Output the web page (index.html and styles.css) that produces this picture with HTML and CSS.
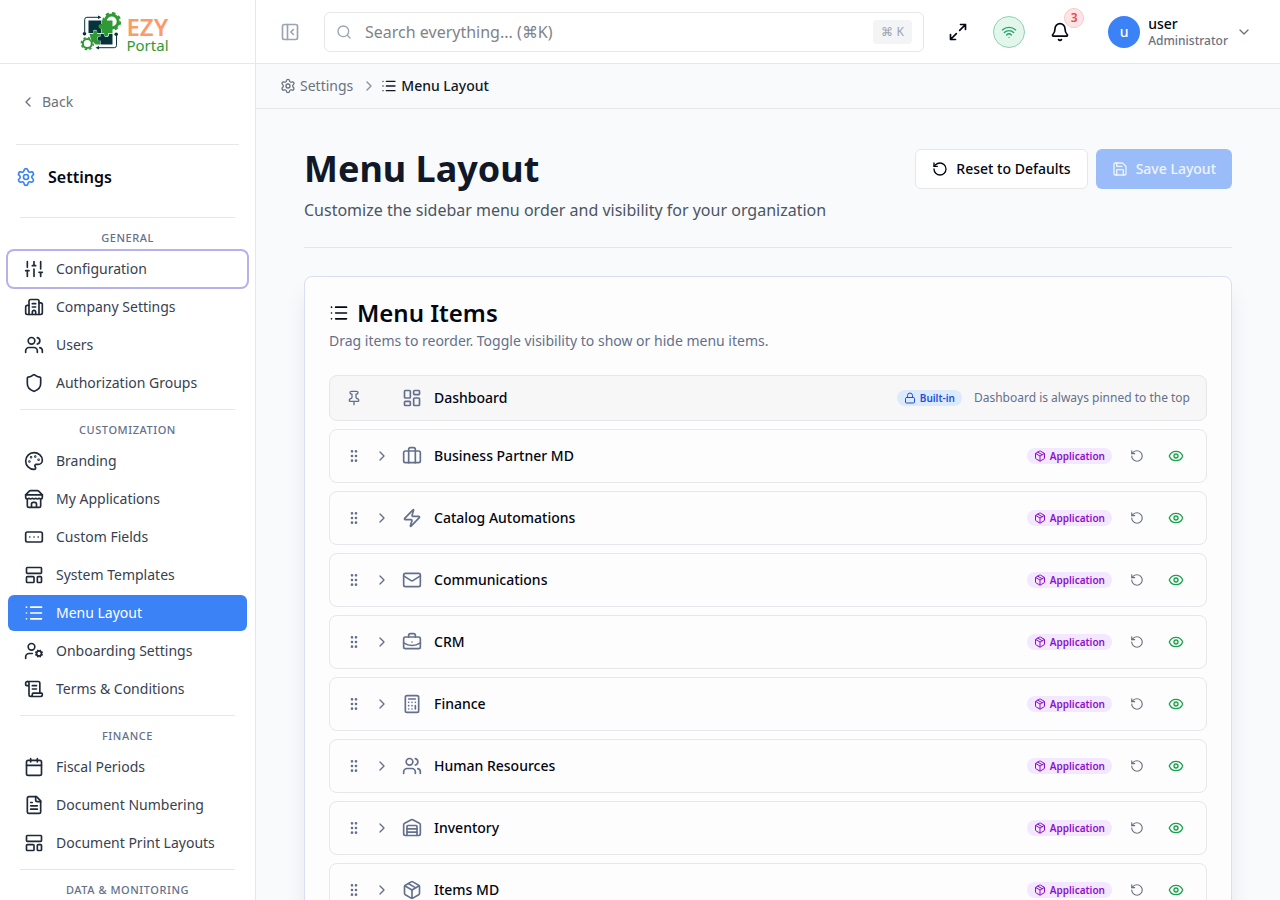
FILE: index.html
```
<!DOCTYPE html>
<html lang="en">
<head>
    <meta charset="UTF-8">
    <meta name="viewport" content="width=device-width, initial-scale=1.0">
    <title>Menu Layout - EZY Portal</title>
    <link rel="stylesheet" href="styles.css">
</head>
<body>
    <!-- Icon set -->
    <svg class="sprite" aria-hidden="true">
        <symbol id="i-left" viewBox="0 0 24 24"><path d="m15 18-6-6 6-6"/></symbol>
        <symbol id="i-right" viewBox="0 0 24 24"><path d="m9 18 6-6-6-6"/></symbol>
        <symbol id="i-down" viewBox="0 0 24 24"><path d="m6 9 6 6 6-6"/></symbol>
        <symbol id="i-settings" viewBox="0 0 24 24"><path d="M9.671 4.136a2.34 2.34 0 0 1 4.659 0 2.34 2.34 0 0 0 3.319 1.915 2.34 2.34 0 0 1 2.33 4.033 2.34 2.34 0 0 0 0 3.831 2.34 2.34 0 0 1-2.33 4.033 2.34 2.34 0 0 0-3.319 1.915 2.34 2.34 0 0 1-4.659 0 2.34 2.34 0 0 0-3.32-1.915 2.34 2.34 0 0 1-2.33-4.033 2.34 2.34 0 0 0 0-3.831A2.34 2.34 0 0 1 6.35 6.051a2.34 2.34 0 0 0 3.319-1.915"/><circle cx="12" cy="12" r="3"/></symbol>
        <symbol id="i-sliders" viewBox="0 0 24 24"><path d="M4 21v-7M4 10V3M12 21v-9M12 8V3M20 21v-5M20 12V3M2 14h4M10 8h4M18 16h4"/></symbol>
        <symbol id="i-building" viewBox="0 0 24 24"><path d="M10 12h4M10 8h4M14 21v-3a2 2 0 0 0-4 0v3"/><path d="M6 10H4a2 2 0 0 0-2 2v7a2 2 0 0 0 2 2h16a2 2 0 0 0 2-2V9a2 2 0 0 0-2-2h-2"/><path d="M6 21V5a2 2 0 0 1 2-2h8a2 2 0 0 1 2 2v16"/></symbol>
        <symbol id="i-users" viewBox="0 0 24 24"><path d="M16 21v-2a4 4 0 0 0-4-4H6a4 4 0 0 0-4 4v2"/><circle cx="9" cy="7" r="4"/><path d="M22 21v-2a4 4 0 0 0-3-3.87M16 3.13a4 4 0 0 1 0 7.75"/></symbol>
        <symbol id="i-shield" viewBox="0 0 24 24"><path d="M20 13c0 5-3.5 7.5-7.66 8.95a1 1 0 0 1-.67-.01C7.5 20.5 4 18 4 13V6a1 1 0 0 1 1-1c2 0 4.5-1.2 6.24-2.72a1.17 1.17 0 0 1 1.52 0C14.51 3.81 17 5 19 5a1 1 0 0 1 1 1z"/></symbol>
        <symbol id="i-palette" viewBox="0 0 24 24"><path d="M12 22a1 1 0 0 1 0-20 10 9 0 0 1 10 9 5 5 0 0 1-5 5h-2.25a1.75 1.75 0 0 0-1.4 2.8l.3.4a1.75 1.75 0 0 1-1.4 2.8z"/><circle cx="13.5" cy="6.5" r=".5"/><circle cx="17.5" cy="10.5" r=".5"/><circle cx="6.5" cy="12.5" r=".5"/><circle cx="8.5" cy="7.5" r=".5"/></symbol>
        <symbol id="i-store" viewBox="0 0 24 24"><path d="m2 7 4.41-4.41A2 2 0 0 1 7.83 2h8.34a2 2 0 0 1 1.42.59L22 7"/><path d="M4 12v8a2 2 0 0 0 2 2h12a2 2 0 0 0 2-2v-8M15 22v-4a2 2 0 0 0-2-2h-2a2 2 0 0 0-2 2v4M2 7h20"/><path d="M22 7v3a2 2 0 0 1-2 2 2.7 2.7 0 0 1-1.59-.63.7.7 0 0 0-.82 0A2.7 2.7 0 0 1 16 12a2.7 2.7 0 0 1-1.59-.63.7.7 0 0 0-.82 0A2.7 2.7 0 0 1 12 12a2.7 2.7 0 0 1-1.59-.63.7.7 0 0 0-.82 0A2.7 2.7 0 0 1 8 12a2.7 2.7 0 0 1-1.59-.63.7.7 0 0 0-.82 0A2.7 2.7 0 0 1 4 12a2 2 0 0 1-2-2V7"/></symbol>
        <symbol id="i-field" viewBox="0 0 24 24"><rect width="20" height="12" x="2" y="6" rx="2"/><path d="M12 12h.01M17 12h.01M7 12h.01"/></symbol>
        <symbol id="i-template" viewBox="0 0 24 24"><rect width="18" height="7" x="3" y="3" rx="1"/><rect width="9" height="7" x="3" y="14" rx="1"/><rect width="5" height="7" x="16" y="14" rx="1"/></symbol>
        <symbol id="i-list" viewBox="0 0 24 24"><path d="M3 5h.01M3 12h.01M3 19h.01M8 5h13M8 12h13M8 19h13"/></symbol>
        <symbol id="i-usercog" viewBox="0 0 24 24"><path d="M10 15H6a4 4 0 0 0-4 4v2"/><circle cx="9" cy="7" r="4"/><circle cx="18" cy="15" r="3"/><path d="m14.305 16.530.923-.382M15.228 13.852l-.923-.383M16.852 12.228l-.383-.923M16.852 17.772l-.383.924M19.148 12.228l.383-.923M19.530 18.696l-.382-.924M20.772 13.852l.924-.383M20.772 16.148l.924.383"/></symbol>
        <symbol id="i-scroll" viewBox="0 0 24 24"><path d="M15 12h-5M15 8h-5M19 17V5a2 2 0 0 0-2-2H4"/><path d="M8 21h12a2 2 0 0 0 2-2v-1a1 1 0 0 0-1-1H11a1 1 0 0 0-1 1v1a2 2 0 1 1-4 0V5a2 2 0 1 0-4 0v2a1 1 0 0 0 1 1h3"/></symbol>
        <symbol id="i-calendar" viewBox="0 0 24 24"><path d="M8 2v4M16 2v4M3 10h18"/><rect width="18" height="18" x="3" y="4" rx="2"/></symbol>
        <symbol id="i-file" viewBox="0 0 24 24"><path d="M15 2H6a2 2 0 0 0-2 2v16a2 2 0 0 0 2 2h12a2 2 0 0 0 2-2V7Z"/><path d="M14 2v4a2 2 0 0 0 2 2h4M10 9H8M16 13H8M16 17H8"/></symbol>
        <symbol id="i-panel" viewBox="0 0 24 24"><rect width="18" height="18" x="3" y="3" rx="2"/><path d="M9 3v18M16 15l-3-3 3-3"/></symbol>
        <symbol id="i-search" viewBox="0 0 24 24"><circle cx="11" cy="11" r="8"/><path d="m21 21-4.300-4.300"/></symbol>
        <symbol id="i-expand" viewBox="0 0 24 24"><path d="M15 3h6v6M21 3l-7 7M3 21l7-7M9 21H3v-6"/></symbol>
        <symbol id="i-wifi" viewBox="0 0 24 24"><path d="M12 20h.01M2 8.820a15 15 0 0 1 20 0M5 12.859a10 10 0 0 1 14 0M8.500 16.429a5 5 0 0 1 7 0"/></symbol>
        <symbol id="i-bell" viewBox="0 0 24 24"><path d="M10.268 21a2 2 0 0 0 3.464 0"/><path d="M3.262 15.326A1 1 0 0 0 4 17h16a1 1 0 0 0 .74-1.673C19.410 13.956 18 12.499 18 8A6 6 0 0 0 6 8c0 4.499-1.411 5.956-2.738 7.326"/></symbol>
        <symbol id="i-reset" viewBox="0 0 24 24"><path d="M3 12a9 9 0 1 0 9-9 9.750 9.750 0 0 0-6.740 2.740L3 8"/><path d="M3 3v5h5"/></symbol>
        <symbol id="i-save" viewBox="0 0 24 24"><path d="M15.200 3a2 2 0 0 1 1.400.6l3.800 3.800a2 2 0 0 1 .6 1.400V19a2 2 0 0 1-2 2H5a2 2 0 0 1-2-2V5a2 2 0 0 1 2-2z"/><path d="M17 21v-7a1 1 0 0 0-1-1H8a1 1 0 0 0-1 1v7M7 3v4a1 1 0 0 0 1 1h7"/></symbol>
        <symbol id="i-pin" viewBox="0 0 24 24"><path d="M12 17v5M9 10.760a2 2 0 0 1-1.110 1.790l-1.780.9A2 2 0 0 0 5 15.240V16a1 1 0 0 0 1 1h12a1 1 0 0 0 1-1v-.76a2 2 0 0 0-1.110-1.790l-1.780-.9A2 2 0 0 1 15 10.760V7a1 1 0 0 1 1-1 2 2 0 0 0 0-4H8a2 2 0 0 0 0 4 1 1 0 0 1 1 1z"/></symbol>
        <symbol id="i-dashboard" viewBox="0 0 24 24"><rect width="7" height="9" x="3" y="3" rx="1"/><rect width="7" height="5" x="14" y="3" rx="1"/><rect width="7" height="9" x="14" y="12" rx="1"/><rect width="7" height="5" x="3" y="16" rx="1"/></symbol>
        <symbol id="i-lock" viewBox="0 0 24 24"><rect width="18" height="11" x="3" y="11" rx="2"/><path d="M7 11V7a5 5 0 0 1 10 0v4"/></symbol>
        <symbol id="i-grip" viewBox="0 0 24 24"><circle cx="9" cy="12" r="1"/><circle cx="9" cy="5" r="1"/><circle cx="9" cy="19" r="1"/><circle cx="15" cy="12" r="1"/><circle cx="15" cy="5" r="1"/><circle cx="15" cy="19" r="1"/></symbol>
        <symbol id="i-luggage" viewBox="0 0 24 24"><path d="M16 20V4a2 2 0 0 0-2-2h-4a2 2 0 0 0-2 2v16"/><rect width="20" height="14" x="2" y="6" rx="2"/></symbol>
        <symbol id="i-zap" viewBox="0 0 24 24"><path d="M4 14a1 1 0 0 1-.78-1.630l9.900-10.200a.5.5 0 0 1 .86.460l-1.920 6.020A1 1 0 0 0 13 10h7a1 1 0 0 1 .78 1.630l-9.900 10.200a.5.5 0 0 1-.86-.46l1.920-6.020A1 1 0 0 0 11 14z"/></symbol>
        <symbol id="i-mail" viewBox="0 0 24 24"><rect width="20" height="16" x="2" y="4" rx="2"/><path d="m22 7-8.970 5.700a1.940 1.940 0 0 1-2.060 0L2 7"/></symbol>
        <symbol id="i-briefcase" viewBox="0 0 24 24"><path d="M12 12h.01M16 6V4a2 2 0 0 0-2-2h-4a2 2 0 0 0-2 2v2M22 13a18.150 18.150 0 0 1-20 0"/><rect width="20" height="14" x="2" y="6" rx="2"/></symbol>
        <symbol id="i-calculator" viewBox="0 0 24 24"><rect width="16" height="20" x="4" y="2" rx="2"/><path d="M8 6h8M16 14v4M16 10h.01M12 10h.01M8 10h.01M12 14h.01M8 14h.01M12 18h.01M8 18h.01"/></symbol>
        <symbol id="i-warehouse" viewBox="0 0 24 24"><path d="M18 21V10a1 1 0 0 0-1-1H7a1 1 0 0 0-1 1v11"/><path d="M22 19a2 2 0 0 1-2 2H4a2 2 0 0 1-2-2V8a2 2 0 0 1 1.132-1.803l7.950-3.974a2 2 0 0 1 1.837 0l7.948 3.974A2 2 0 0 1 22 8zM6 13h12M6 17h12"/></symbol>
        <symbol id="i-package" viewBox="0 0 24 24"><path d="M11 21.730a2 2 0 0 0 2 0l7-4A2 2 0 0 0 21 16V8a2 2 0 0 0-1-1.730l-7-4a2 2 0 0 0-2 0l-7 4A2 2 0 0 0 3 8v8a2 2 0 0 0 1 1.730zM12 22V12"/><path d="M3.290 7 12 12l8.710-5M7.500 4.270l9 5.150"/></symbol>
        <symbol id="i-eye" viewBox="0 0 24 24"><path d="M2.062 12.348a1 1 0 0 1 0-.696 10.750 10.750 0 0 1 19.876 0 1 1 0 0 1 0 .696 10.750 10.750 0 0 1-19.876 0"/><circle cx="12" cy="12" r="3"/></symbol>
    </svg>

    <div class="app">
        <aside class="sidebar">
            <a class="logo" href="#" aria-label="EZY Portal">
                <svg class="logo-mark" viewBox="0 0 42 40" aria-hidden="true">
                    <path class="wire" d="M4.700 20V7.500q0-2.200 2.200-2.200H19M36.500 24v9.500q0 2.200-2.200 2.200H18"/>
                    <path class="navy" d="m18 3.500 3.500 1.800L18 7.100zM19 33.900l-3.500 1.800 3.500 1.800z"/>
                    <circle class="navy" cx="4.500" cy="21.700" r="1.800"/>
                    <circle class="navy" cx="36.200" cy="22.200" r="1.800"/>
                    <circle class="gear" cx="31.700" cy="9.500" r="6.500"/>
                    <circle class="teeth" cx="31.700" cy="9.500" r="8.500"/>
                    <circle class="gear gear-small" cx="7.300" cy="31.600" r="4.500"/>
                    <circle class="teeth teeth-small" cx="7.300" cy="31.600" r="6"/>
                    <path class="navy" d="M8.500 8.500h12.700v3.800c4-2 4.500 5 0 3.800v5h-4c1-4.500-5.500-4.500-4 0H8.500z"/>
                    <path class="leaf" d="M21.700 8.500h10.800V21h-4.300c1.500 4.500-5.500 4.500-4 0h-2.500v-4.300c-4 1.500-4.500-6 0-4z"/>
                    <path class="navy" d="M20.500 21.700h3.200c0 4.500 5.500 4.500 5.500 0h3.300v10.800h-12v-4c-4 1.500-4-5 0-4z"/>
                    <path class="leaf" d="M9.500 21.700h4c-2-4.500 5-4.500 3.500 0h3v2.500c-4-.5-4 5 0 4.800v3.500h-4.500l-4.500-5z"/>
                </svg>
                <span class="logo-text"><b>EZY</b><span>Portal</span></span>
            </a>
            <a class="back" href="#"><svg class="icon icon-16"><use href="#i-left"/></svg>Back</a>
            <h2 class="sidebar-title"><svg class="icon"><use href="#i-settings"/></svg>Settings</h2>
            <nav class="nav">
                <h3 class="nav-heading">General</h3>
                <a class="nav-item focused" href="#"><svg class="icon"><use href="#i-sliders"/></svg>Configuration</a>
                <a class="nav-item" href="#"><svg class="icon"><use href="#i-building"/></svg>Company Settings</a>
                <a class="nav-item" href="#"><svg class="icon"><use href="#i-users"/></svg>Users</a>
                <a class="nav-item" href="#"><svg class="icon"><use href="#i-shield"/></svg>Authorization Groups</a>
                <h3 class="nav-heading">Customization</h3>
                <a class="nav-item" href="#"><svg class="icon"><use href="#i-palette"/></svg>Branding</a>
                <a class="nav-item" href="#"><svg class="icon"><use href="#i-store"/></svg>My Applications</a>
                <a class="nav-item" href="#"><svg class="icon"><use href="#i-field"/></svg>Custom Fields</a>
                <a class="nav-item" href="#"><svg class="icon"><use href="#i-template"/></svg>System Templates</a>
                <a class="nav-item active" href="#" aria-current="page"><svg class="icon"><use href="#i-list"/></svg>Menu Layout</a>
                <a class="nav-item" href="#"><svg class="icon"><use href="#i-usercog"/></svg>Onboarding Settings</a>
                <a class="nav-item" href="#"><svg class="icon"><use href="#i-scroll"/></svg>Terms &amp; Conditions</a>
                <h3 class="nav-heading">Finance</h3>
                <a class="nav-item" href="#"><svg class="icon"><use href="#i-calendar"/></svg>Fiscal Periods</a>
                <a class="nav-item" href="#"><svg class="icon"><use href="#i-file"/></svg>Document Numbering</a>
                <a class="nav-item" href="#"><svg class="icon"><use href="#i-template"/></svg>Document Print Layouts</a>
                <h3 class="nav-heading">Data &amp; Monitoring</h3>
            </nav>
        </aside>

        <div class="content">
            <header class="topbar">
                <button class="icon-btn toggle" aria-label="Collapse sidebar"><svg class="icon"><use href="#i-panel"/></svg></button>
                <div class="search">
                    <svg class="icon icon-16"><use href="#i-search"/></svg>
                    <input type="text" placeholder="Search everything... (⌘K)" aria-label="Search everything">
                    <kbd>⌘ K</kbd>
                </div>
                <div class="topbar-actions">
                    <button class="icon-btn" aria-label="Full screen"><svg class="icon"><use href="#i-expand"/></svg></button>
                    <button class="icon-btn online" aria-label="Online"><svg class="icon icon-16"><use href="#i-wifi"/></svg></button>
                    <button class="icon-btn bell" aria-label="Notifications"><svg class="icon"><use href="#i-bell"/></svg><span class="count">3</span></button>
                </div>
                <button class="user-menu">
                    <span class="avatar">u</span>
                    <span class="user-info"><b>user</b><small>Administrator</small></span>
                    <svg class="icon icon-16"><use href="#i-down"/></svg>
                </button>
            </header>

            <nav class="breadcrumb" aria-label="Breadcrumb">
                <a href="#"><svg class="icon icon-16"><use href="#i-settings"/></svg>Settings</a>
                <svg class="icon icon-16 separator"><use href="#i-right"/></svg>
                <span class="current"><svg class="icon icon-16"><use href="#i-list"/></svg>Menu Layout</span>
            </nav>

            <main class="page">
                <div class="page-header">
                    <div>
                        <h1>Menu Layout</h1>
                        <p>Customize the sidebar menu order and visibility for your organization</p>
                    </div>
                    <div class="page-actions">
                        <button class="btn"><svg class="icon icon-16"><use href="#i-reset"/></svg>Reset to Defaults</button>
                        <button class="btn btn-primary" disabled><svg class="icon icon-16"><use href="#i-save"/></svg>Save Layout</button>
                    </div>
                </div>

                <section class="card">
                    <h2><svg class="icon"><use href="#i-list"/></svg>Menu Items</h2>
                    <p class="card-text">Drag items to reorder. Toggle visibility to show or hide menu items.</p>

                    <ul class="items">
                        <li class="item pinned">
                            <svg class="icon icon-16"><use href="#i-pin"/></svg>
                            <span class="spacer"></span>
                            <svg class="icon"><use href="#i-dashboard"/></svg>
                            <span class="name">Dashboard</span>
                            <span class="badge badge-blue"><svg class="icon icon-12"><use href="#i-lock"/></svg>Built-in</span>
                            <span class="hint">Dashboard is always pinned to the top</span>
                        </li>
                        <li class="item">
                            <svg class="icon icon-16"><use href="#i-grip"/></svg>
                            <button class="small-btn" aria-label="Expand"><svg class="icon icon-16"><use href="#i-right"/></svg></button>
                            <svg class="icon"><use href="#i-luggage"/></svg>
                            <span class="name">Business Partner MD</span>
                            <span class="badge"><svg class="icon icon-12"><use href="#i-package"/></svg>Application</span>
                            <button class="row-btn" aria-label="Reset"><svg class="icon icon-14"><use href="#i-reset"/></svg></button>
                            <button class="row-btn visible" aria-label="Hide"><svg class="icon icon-16"><use href="#i-eye"/></svg></button>
                        </li>
                        <li class="item">
                            <svg class="icon icon-16"><use href="#i-grip"/></svg>
                            <button class="small-btn" aria-label="Expand"><svg class="icon icon-16"><use href="#i-right"/></svg></button>
                            <svg class="icon"><use href="#i-zap"/></svg>
                            <span class="name">Catalog Automations</span>
                            <span class="badge"><svg class="icon icon-12"><use href="#i-package"/></svg>Application</span>
                            <button class="row-btn" aria-label="Reset"><svg class="icon icon-14"><use href="#i-reset"/></svg></button>
                            <button class="row-btn visible" aria-label="Hide"><svg class="icon icon-16"><use href="#i-eye"/></svg></button>
                        </li>
                        <li class="item">
                            <svg class="icon icon-16"><use href="#i-grip"/></svg>
                            <button class="small-btn" aria-label="Expand"><svg class="icon icon-16"><use href="#i-right"/></svg></button>
                            <svg class="icon"><use href="#i-mail"/></svg>
                            <span class="name">Communications</span>
                            <span class="badge"><svg class="icon icon-12"><use href="#i-package"/></svg>Application</span>
                            <button class="row-btn" aria-label="Reset"><svg class="icon icon-14"><use href="#i-reset"/></svg></button>
                            <button class="row-btn visible" aria-label="Hide"><svg class="icon icon-16"><use href="#i-eye"/></svg></button>
                        </li>
                        <li class="item">
                            <svg class="icon icon-16"><use href="#i-grip"/></svg>
                            <button class="small-btn" aria-label="Expand"><svg class="icon icon-16"><use href="#i-right"/></svg></button>
                            <svg class="icon"><use href="#i-briefcase"/></svg>
                            <span class="name">CRM</span>
                            <span class="badge"><svg class="icon icon-12"><use href="#i-package"/></svg>Application</span>
                            <button class="row-btn" aria-label="Reset"><svg class="icon icon-14"><use href="#i-reset"/></svg></button>
                            <button class="row-btn visible" aria-label="Hide"><svg class="icon icon-16"><use href="#i-eye"/></svg></button>
                        </li>
                        <li class="item">
                            <svg class="icon icon-16"><use href="#i-grip"/></svg>
                            <button class="small-btn" aria-label="Expand"><svg class="icon icon-16"><use href="#i-right"/></svg></button>
                            <svg class="icon"><use href="#i-calculator"/></svg>
                            <span class="name">Finance</span>
                            <span class="badge"><svg class="icon icon-12"><use href="#i-package"/></svg>Application</span>
                            <button class="row-btn" aria-label="Reset"><svg class="icon icon-14"><use href="#i-reset"/></svg></button>
                            <button class="row-btn visible" aria-label="Hide"><svg class="icon icon-16"><use href="#i-eye"/></svg></button>
                        </li>
                        <li class="item">
                            <svg class="icon icon-16"><use href="#i-grip"/></svg>
                            <button class="small-btn" aria-label="Expand"><svg class="icon icon-16"><use href="#i-right"/></svg></button>
                            <svg class="icon"><use href="#i-users"/></svg>
                            <span class="name">Human Resources</span>
                            <span class="badge"><svg class="icon icon-12"><use href="#i-package"/></svg>Application</span>
                            <button class="row-btn" aria-label="Reset"><svg class="icon icon-14"><use href="#i-reset"/></svg></button>
                            <button class="row-btn visible" aria-label="Hide"><svg class="icon icon-16"><use href="#i-eye"/></svg></button>
                        </li>
                        <li class="item">
                            <svg class="icon icon-16"><use href="#i-grip"/></svg>
                            <button class="small-btn" aria-label="Expand"><svg class="icon icon-16"><use href="#i-right"/></svg></button>
                            <svg class="icon"><use href="#i-warehouse"/></svg>
                            <span class="name">Inventory</span>
                            <span class="badge"><svg class="icon icon-12"><use href="#i-package"/></svg>Application</span>
                            <button class="row-btn" aria-label="Reset"><svg class="icon icon-14"><use href="#i-reset"/></svg></button>
                            <button class="row-btn visible" aria-label="Hide"><svg class="icon icon-16"><use href="#i-eye"/></svg></button>
                        </li>
                        <li class="item">
                            <svg class="icon icon-16"><use href="#i-grip"/></svg>
                            <button class="small-btn" aria-label="Expand"><svg class="icon icon-16"><use href="#i-right"/></svg></button>
                            <svg class="icon"><use href="#i-package"/></svg>
                            <span class="name">Items MD</span>
                            <span class="badge"><svg class="icon icon-12"><use href="#i-package"/></svg>Application</span>
                            <button class="row-btn" aria-label="Reset"><svg class="icon icon-14"><use href="#i-reset"/></svg></button>
                            <button class="row-btn visible" aria-label="Hide"><svg class="icon icon-16"><use href="#i-eye"/></svg></button>
                        </li>
                    </ul>
                </section>
            </main>
        </div>
    </div>
</body>
</html>
```
FILE: styles.css
```
* {
    box-sizing: border-box;
}

body {
    margin: 0;
    font-family: "Noto Sans", sans-serif;
    font-size: 14px;
    line-height: 20px;
    color: #030712;
    background-color: #f9fafc;
}

h1, h2, h3, p, ul {
    margin: 0;
    padding: 0;
}

a {
    color: inherit;
    text-decoration: none;
}

button {
    font: inherit;
    color: inherit;
    padding: 0;
    border: 0;
    background: none;
    cursor: pointer;
}

.sprite {
    display: none;
}

.icon {
    width: 20px;
    height: 20px;
    flex-shrink: 0;
    fill: none;
    stroke: currentColor;
    stroke-width: 2;
    stroke-linecap: round;
    stroke-linejoin: round;
}

.icon-16 {
    width: 16px;
    height: 16px;
}

.icon-14 {
    width: 14px;
    height: 14px;
}

.icon-12 {
    width: 12px;
    height: 12px;
}

.app {
    display: flex;
    height: 100vh;
    overflow: hidden;
}

/* Sidebar */
.sidebar {
    display: flex;
    flex-direction: column;
    width: 256px;
    flex-shrink: 0;
    background-color: #fff;
    border-right: 1px solid #e5e7eb;
}

.logo {
    display: flex;
    justify-content: center;
    align-items: center;
    gap: 4px;
    height: 64px;
    flex-shrink: 0;
    padding-right: 6px;
    border-bottom: 1px solid #e5e7eb;
}

.logo-mark {
    width: 42px;
    height: 40px;
}

.navy {
    fill: #06323d;
}

.leaf {
    fill: #2f9a35;
}

.wire {
    fill: none;
    stroke: #06323d;
    stroke-width: 1;
}

.gear, .teeth {
    fill: none;
    stroke: #2f9a35;
    stroke-width: 3;
}

.gear-small {
    stroke-width: 2;
}

.teeth {
    stroke-width: 2;
    stroke-dasharray: 3.4 3.3;
}

.teeth-small {
    stroke-width: 1.5;
    stroke-dasharray: 2.4 2.3;
}

.logo-text {
    display: flex;
    flex-direction: column;
    padding-top: 6px;
    color: #2f9a35;
    font-size: 15px;
    line-height: 16px;
}

.logo-text b {
    color: #fb9a6b;
    font-size: 24px;
    font-weight: 600;
    line-height: 20px;
}

.back {
    display: flex;
    align-items: center;
    gap: 6px;
    margin: 0 16px;
    padding: 28px 4px 32px;
    color: #6b7280;
    border-bottom: 1px solid #e5e7eb;
}

.sidebar-title {
    display: flex;
    align-items: center;
    gap: 12px;
    padding: 20px 16px 22px;
    font-size: 16px;
    font-weight: 600;
    line-height: 24px;
}

.sidebar-title .icon {
    color: #3b82f6;
}

.nav {
    display: flex;
    flex-direction: column;
    gap: 2px;
    padding: 0 8px;
}

.nav-heading {
    margin: 6px 12px 0;
    padding: 12px 0 3px;
    border-top: 1px solid #e5e7eb;
    color: #64708b;
    font-size: 11px;
    font-weight: 500;
    line-height: 16px;
    letter-spacing: 0.05em;
    text-align: center;
    text-transform: uppercase;
}

.nav-item {
    display: flex;
    align-items: center;
    gap: 12px;
    height: 36px;
    flex-shrink: 0;
    padding: 0 16px;
    border-radius: 6px;
    color: #374151;
}

.nav-item .icon {
    color: #1f2937;
}

.nav-item.focused {
    box-shadow: 0 0 0 2px #b8b0e8;
}

.nav-item.active, .nav-item.active .icon {
    background-color: #3b82f6;
    color: #fff;
}

/* Top bar */
.content {
    display: flex;
    flex-direction: column;
    flex: 1;
    min-width: 0;
}

.topbar {
    display: flex;
    align-items: center;
    height: 64px;
    flex-shrink: 0;
    padding: 0 28px 0 18px;
    background-color: #fff;
    border-bottom: 1px solid #e5e7eb;
}

.icon-btn {
    display: flex;
    justify-content: center;
    align-items: center;
    width: 32px;
    height: 32px;
    border-radius: 50%;
}

.toggle {
    color: #9ca3af;
}

.search {
    display: flex;
    align-items: center;
    flex: 1;
    gap: 12px;
    max-width: 600px;
    height: 40px;
    margin-left: 18px;
    padding: 0 11px;
    border: 1px solid #e5e7eb;
    border-radius: 6px;
    color: #9ca3af;
}

.search input {
    flex: 1;
    min-width: 0;
    padding: 0 1px;
    border: 0;
    outline: 0;
    background: none;
    font: inherit;
    font-size: 16px;
}

.search input::placeholder {
    color: #808389;
}

.search kbd {
    padding: 2px 8px;
    border-radius: 4px;
    background-color: #f3f4f6;
    font-family: inherit;
    font-size: 12px;
}

.topbar-actions {
    display: flex;
    gap: 19px;
    margin-left: auto;
}

.online {
    border: 1px solid #8fd3b0;
    background-color: #e3f6ec;
    color: #22a366;
}

.bell {
    position: relative;
}

.count {
    position: absolute;
    top: -8px;
    right: -8px;
    width: 20px;
    height: 20px;
    border: 1px solid #fac8c8;
    border-radius: 50%;
    background-color: #fde5e5;
    color: #e5484d;
    font-size: 12px;
    font-weight: 600;
    line-height: 18px;
}

.user-menu {
    display: flex;
    align-items: center;
    margin-left: 32px;
    text-align: left;
}

.user-menu > .icon {
    margin-left: 8px;
    color: #6b7280;
}

.avatar {
    width: 32px;
    height: 32px;
    border-radius: 50%;
    background-color: #3b82f6;
    color: #fff;
    font-weight: 500;
    line-height: 32px;
    text-align: center;
}

.user-info {
    display: flex;
    flex-direction: column;
    margin-left: 8px;
}

.user-info b {
    font-weight: 500;
    line-height: 18px;
}

.user-info small {
    color: #6b7280;
    font-size: 12px;
    font-weight: 500;
    line-height: 16px;
}

.breadcrumb {
    display: flex;
    align-items: center;
    height: 45px;
    flex-shrink: 0;
    padding: 0 24px;
    border-bottom: 1px solid #e5e7eb;
    color: #6b7280;
}

.breadcrumb a, .current {
    display: flex;
    align-items: center;
    gap: 4px;
}

.separator {
    margin: 0 4px 0 8px;
    color: #8b929e;
}

.current {
    color: #111827;
    font-weight: 500;
}

/* Page */
.page {
    flex: 1;
    min-height: 0;
    overflow: hidden;
    padding: 36px 48px;
}

.page-header {
    display: flex;
    justify-content: space-between;
    align-items: flex-start;
    padding-bottom: 25px;
    border-bottom: 1px solid #e2e5ea;
}

.page-header h1 {
    color: #111827;
    font-size: 36px;
    font-weight: 700;
    line-height: 48px;
}

.page-header p {
    margin-top: 5px;
    color: #4b5563;
    font-size: 16px;
    line-height: 24px;
}

.page-actions {
    display: flex;
    gap: 8px;
    padding-top: 4px;
}

.btn {
    display: flex;
    align-items: center;
    gap: 8px;
    height: 40px;
    padding: 0 16px;
    border: 1px solid #e5e7eb;
    border-radius: 6px;
    background-color: #fff;
    font-weight: 500;
}

.btn-primary {
    border: 0;
    background-color: #9abdf9;
    color: #eef4fe;
    cursor: default;
}

.card {
    margin-top: 28px;
    padding: 24px;
    border: 1px solid #d9def2;
    border-radius: 8px;
    background-color: #fdfdfe;
    box-shadow: 0 16px 24px -4px rgba(17, 24, 39, 0.1);
}

.card h2 {
    display: flex;
    align-items: center;
    gap: 8px;
    font-size: 24px;
    font-weight: 600;
    line-height: 24px;
}

.card-text {
    margin-top: 6px;
    color: #64708b;
}

.items {
    display: flex;
    flex-direction: column;
    gap: 8px;
    margin-top: 24px;
    list-style: none;
}

.item {
    display: flex;
    align-items: center;
    height: 54px;
    gap: 12px;
    padding: 0 16px;
    border: 1px solid #e5e7eb;
    border-radius: 8px;
    color: #64708b;
}

.pinned {
    height: 46px;
    background-color: #f7f7f8;
}

.small-btn, .spacer {
    display: flex;
    width: 16px;
}

.name {
    flex: 1;
    color: #030712;
    font-weight: 500;
}

.badge {
    display: flex;
    align-items: center;
    gap: 4px;
    height: 16px;
    padding: 0 7px;
    border-radius: 8px;
    background-color: #f3e8ff;
    color: #8b0fc9;
    font-size: 10px;
    font-weight: 600;
    line-height: 16px;
}

.badge-blue {
    background-color: #dbeafe;
    color: #1d4ed8;
}

.hint {
    font-size: 12px;
}

.row-btn {
    display: flex;
    justify-content: center;
    width: 26px;
    color: #6b7280;
}

.row-btn.visible {
    width: 28px;
    color: #16a34a;
}
```
